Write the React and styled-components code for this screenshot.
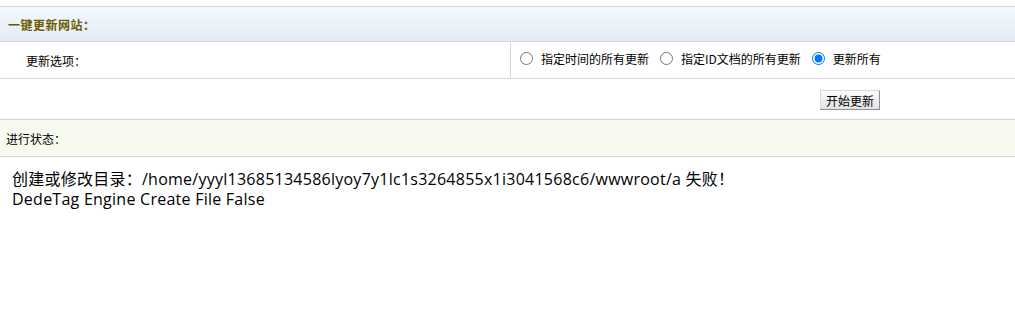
import React from "react";
import styled, { createGlobalStyle } from "styled-components";

const GlobalStyle = createGlobalStyle`
  html, body {
    margin: 0;
    padding: 0;
    background: #fff;
  }
  body {
    font-family: "Noto Sans CJK SC", "Liberation Sans", sans-serif;
    font-size: 12px;
    color: #000;
    text-spacing-trim: space-all;
  }
`;

const Page = styled.div`
  padding-top: 6px;
`;

const Panel = styled.div`
  border-top: 1px solid #d5d5d5;
`;

const Header = styled.div`
  height: 34px;
  display: flex;
  align-items: center;
  padding-left: 8px;
  background: linear-gradient(to bottom, #f5f9fd, #e1ebf5);
  border-bottom: 1px solid #d5d5d5;
  font-weight: bold;
  color: #6b5a00;
  letter-spacing: 0.5px;
`;

const Row = styled.div`
  display: flex;
  height: ${(p) => p.h}px;
  background: ${(p) => p.bg || "#fff"};
  border-bottom: 1px solid #d5d5d5;
`;

const Label = styled.div`
  width: ${(p) => p.w || "auto"};
  box-sizing: border-box;
  padding-left: ${(p) => p.pl}px;
  display: flex;
  align-items: center;
  border-right: ${(p) => (p.divider ? "1px solid #d5d5d5" : "none")};
`;

const Options = styled.div`
  flex: 1;
  display: flex;
  align-items: center;
  padding-left: 7px;
  padding-bottom: 4px;
`;

const Option = styled.label`
  display: flex;
  align-items: center;
  margin-right: 9px;

  input {
    margin: 0 8px 0 2px;
    width: 13px;
    height: 13px;
  }
`;

const Actions = styled.div`
  flex: 1;
  display: flex;
  justify-content: flex-end;
  padding-right: 135px;
  padding-top: 11px;
`;

const Button = styled.button`
  height: 20px;
  padding: 0 5px;
  font-family: inherit;
  font-size: 12px;
  color: #000;
  background: linear-gradient(to bottom, #fbfbfb, #e3e3e3);
  border: 1px solid #a0a0a0;
  border-color: #d8d8d8 #8f8f8f #8f8f8f #d8d8d8;
  border-radius: 0;
  cursor: pointer;
`;

const Output = styled.div`
  padding: 12px 12px;
  font-family: "Open Sans", "Noto Sans CJK SC", sans-serif;
  font-size: 16px;
  line-height: 20px;
  letter-spacing: 0.25px;
  color: #000;
`;

export default function App() {
  return (
    <>
      <GlobalStyle />
      <Page>
        <Panel>
          <Header>一键更新网站：</Header>
          <Row h={36}>
            <Label w="511px" pl={26} divider>
              更新选项：
            </Label>
            <Options>
              <Option>
                <input type="radio" name="uptype" />
                指定时间的所有更新
              </Option>
              <Option>
                <input type="radio" name="uptype" />
                指定ID文档的所有更新
              </Option>
              <Option>
                <input type="radio" name="uptype" defaultChecked />
                更新所有
              </Option>
            </Options>
          </Row>
          <Row h={40}>
            <Actions>
              <Button type="button">开始更新</Button>
            </Actions>
          </Row>
          <Row h={36} bg="#f9faef">
            <Label pl={6}>进行状态：</Label>
          </Row>
        </Panel>
        <Output>
          创建或修改目录：/home/yyyl13685134586lyoy7y1lc1s3264855x1i3041568c6/wwwroot/a 失败！
          <br />
          DedeTag Engine Create File False
        </Output>
      </Page>
    </>
  );
}
